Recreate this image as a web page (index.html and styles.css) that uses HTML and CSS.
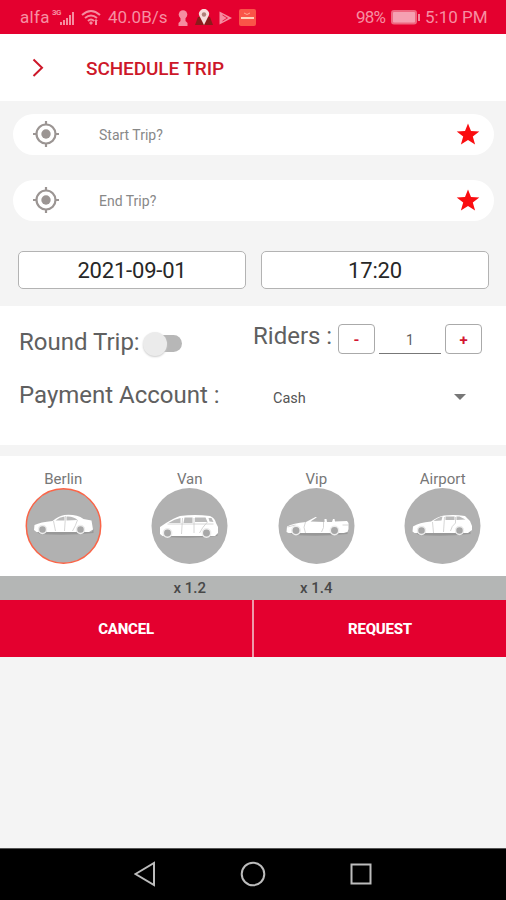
FILE: index.html
```html
<!DOCTYPE html>
<html lang="en">
<head>
<meta charset="utf-8">
<title>Schedule Trip</title>
<link rel="stylesheet" href="styles.css">
</head>
<body>
<div class="status">
  <span class="carrier">alfa</span><span class="network">3G</span>
  <svg class="signal" width="15" height="14" viewBox="0 0 15 14"><path d="M0 11h2v3H0zM3 9h2v5H3zM6 7h2v7H6zM9 4h2v10H9zM12 1h2v13h-2z"/></svg>
  <svg class="wifi" width="20" height="17" viewBox="0 0 20 17"><path d="M1 6Q10-2 19 6M4 9q6-5 12 0M7 12q3-3 6 0"/><path class="solid" d="M8 14l2-2 2 2-2 2zM13 12l2-2 2 2h-1v4h-2v-4z"/></svg>
  <span class="speed">40.0B/s</span>
  <svg class="keyhole" width="10" height="16" viewBox="0 0 10 16"><circle cx="5" cy="4.500" r="4.300"/><path d="M2.500 7h5v4l2 2v3h-9v-3l2-2z"/></svg>
  <svg class="pin" width="18" height="17" viewBox="0 0 18 17"><path fill="#8b1b1b" d="M3 8h12l3 8H0z"/><path fill="#f8dedb" d="M9 16L5 8a5 5 0 1 1 8 0z"/><circle cx="9" cy="5.500" r="2.200" fill="#b08078"/></svg>
  <svg class="play" width="13" height="14" viewBox="0 0 13 14"><path d="M.5.5L13 7 .5 13.500z"/><path class="fold" d="M3.500 4l5 3-5 3"/></svg>
  <svg class="bag" width="17" height="17" viewBox="0 0 17 17"><rect width="17" height="17" rx="2" fill="#fa5448"/><path d="M5 4q3 3 6 0" fill="none" stroke="#ffaa93"/><path d="M2 9h13" stroke="#ffd3bc" stroke-width="2"/></svg>
  <span class="percent">98%</span>
  <svg class="battery" width="29" height="15" viewBox="0 0 29 15"><rect x="1" y="1" width="24" height="12.500" rx="2" fill="#f5a1b2" stroke="#ee6880" stroke-width="2"/><path d="M27 4h2v7h-2z" fill="#f28ca0"/></svg>
  <span class="clock">5:10 PM</span>
</div>
<header class="header">
  <svg class="chevron" width="12" height="20" viewBox="0 0 12 20"><path d="M1.500 1.500L10 9.800 1.500 18"/></svg>
  <h1 class="title">SCHEDULE TRIP</h1>
</header>
<main>
  <section class="places">
    <div class="place">
      <svg class="target" width="28" height="28" viewBox="0 0 28 28"><circle cx="14" cy="14" r="9.500"/><circle class="dot" cx="14" cy="14" r="4.700"/><path d="M14 1v4M14 23v4M1 14h4M23 14h4"/></svg>
      <span class="hint">Start Trip?</span>
      <svg class="star" width="24" height="22" viewBox="0 0 24 22"><path d="M12 .5l3 7.600 8.300.4-6.500 5 2.300 8-7.100-4.500-7.100 4.500 2.300-8-6.500-5L9 8.100z"/></svg>
    </div>
    <div class="place">
      <svg class="target" width="28" height="28" viewBox="0 0 28 28"><circle cx="14" cy="14" r="9.500"/><circle class="dot" cx="14" cy="14" r="4.700"/><path d="M14 1v4M14 23v4M1 14h4M23 14h4"/></svg>
      <span class="hint">End Trip?</span>
      <svg class="star" width="24" height="22" viewBox="0 0 24 22"><path d="M12 .5l3 7.600 8.300.4-6.500 5 2.300 8-7.100-4.500-7.100 4.500 2.300-8-6.500-5L9 8.100z"/></svg>
    </div>
    <div class="when"><div class="field">2021-09-01</div><div class="field">17:20</div></div>
  </section>
  <section class="options">
    <div class="trip-row">
      <span class="label round">Round Trip:</span>
      <span class="switch"><span class="thumb"></span></span>
      <span class="label riders">Riders :</span>
      <span class="step">-</span>
      <span class="count">1</span>
      <span class="step">+</span>
    </div>
    <div class="pay-row">
      <span class="label payment">Payment Account :</span>
      <span class="method">Cash</span>
      <span class="caret"></span>
    </div>
  </section>
  <section class="cars">
    <div class="car"><span class="name">Berlin</span>
      <svg width="77" height="76" viewBox="0 0 76 76"><circle class="disc chosen" cx="38" cy="38" r="37.200"/><path class="shade" d="M12 44h54l2-3v4q-26 3-54 1z"/><path class="body" d="M8.500 42l.5-5q6-3 18-4 6-5 12-6 12-1 19 4l8 1.500 1 6 .5 3-4 2.500H11z"/><path class="glass" d="M30 32.500q4-3.500 9-4v4zM41 28.500q7-.5 11 3.500l-11 .5z"/><path class="seam" d="M40 28l-1 15M28 33l2 10M52 32q-2 6-5 11"/><g class="wheel"><circle cx="17" cy="41.500" r="4"/><circle cx="55" cy="41.500" r="4"/></g></svg>
    </div>
    <div class="car"><span class="name">Van</span>
      <svg width="77" height="76" viewBox="0 0 76 76"><circle class="disc" cx="38" cy="38" r="38"/><path class="shade" d="M13 47h50l3-3v4q-25 3-52 1z"/><path class="body" d="M8.500 46V39l6-4q8-5 14-7 15-2 30 0 5 2 6 7l2 4v6l-3 3H11z"/><path class="glass" d="M17 35q6-4 12-5v5zM33 29.500h8v5.500h-9zM43.500 29.500H54l2 4.500H43.500zM57 30h3l2 4-4-.5z"/><path class="seam" d="M31 30l-1 16M42.500 30v15M56 34q-5 5-8 11M16 36h46"/><g class="wheel"><circle cx="16" cy="45" r="4.200"/><circle cx="55" cy="45" r="4.200"/></g></svg>
    </div>
    <div class="car"><span class="name">Vip</span>
      <svg width="77" height="76" viewBox="0 0 76 76"><circle class="disc" cx="38" cy="38" r="38"/><path class="shade" d="M12 45h54l3-3v4q-26 3-54 1z"/><path class="body" d="M8 44l.5-5.500q6-3.500 19-4.500l9.500-5 1.500.3L32 33.500l14 .5v-3h2l.5 3h5l1-3h1.500l.5 2.500 12-.5 1.500 2v6l-1 3-4 1H10z"/><path class="seam" d="M27 34q-3 5 0 11M45 34q1 6-2 10M9 39l8-2M64 37h6"/><g class="wheel"><circle cx="17.500" cy="42.500" r="4.200"/><circle cx="56" cy="42.500" r="4.200"/></g></svg>
    </div>
    <div class="car"><span class="name">Airport</span>
      <svg width="77" height="76" viewBox="0 0 76 76"><circle class="disc" cx="38" cy="38" r="38"/><path class="shade" d="M12 45h50l4-3v4q-26 3-52 1z"/><path class="body" d="M8 43.500l.5-5q6-4 18-5 7-5 13-6 11-1 21 .5l5 5 2 5v4l-4 3H10z"/><path class="glass" d="M29 33q5-4 9-4.500l-1 4zM41 28.500h9v3.500h-9zM52 28.500h3l6 3-9 .5z"/><path class="seam" d="M28 34l1 11M40 29l-1 15M51 29v6q-4 3-5 8"/><g class="wheel"><circle cx="17" cy="42.500" r="4"/><circle cx="55" cy="42.500" r="4"/></g></svg>
    </div>
  </section>
  <div class="rates"><span></span><span>x 1.2</span><span>x 1.4</span><span></span></div>
  <div class="actions"><div class="action">CANCEL</div><div class="action">REQUEST</div></div>
</main>
<nav class="nav">
  <svg width="22" height="26" viewBox="0 0 22 26"><path d="M1.500 13L20 2v22z"/></svg>
  <svg width="26" height="26" viewBox="0 0 26 26"><circle cx="13" cy="13" r="11.300"/></svg>
  <svg width="22" height="26" viewBox="0 0 22 26"><path d="M1.500 3.500h19v19h-19z"/></svg>
</nav>
</body>
</html>
```
FILE: styles.css
```css
* { box-sizing: border-box; }
body { margin: 0; width: 506px; height: 900px; display: flex; flex-direction: column; background: #f4f4f4; font-family: Roboto, "Liberation Sans", sans-serif; color: #666; overflow: hidden; }
main { flex: 1; }
svg { display: block; flex: none; }
span { white-space: nowrap; }
.status { height: 34px; padding-left: 20px; display: flex; align-items: center; background: #e4002f; color: #f68fa2; font-size: 17px; line-height: 36px; }
.status svg { fill: #f58ca0; margin-top: 1px; }
.carrier { width: 32px; letter-spacing: .3px; }
.network { width: 8px; font-size: 8px; font-weight: 700; line-height: 10px; margin-top: -9px; letter-spacing: -.5px; }
.wifi { margin-left: 6px; }
.status .wifi { fill: none; stroke: #f58ca0; stroke-width: 2; }
.wifi .solid { fill: #f58ca0; stroke: none; }
.speed { width: 59px; margin-left: 7px; letter-spacing: 0; }
.keyhole { margin-left: 11px; }
.pin { margin-left: 7px; }
.play { margin-left: 6px; }
.status .fold { fill: none; stroke: #e4002f; stroke-width: .8; }
.bag { margin-left: 7px; }
.percent { width: 35px; margin-left: 100px; letter-spacing: -.8px; }
.clock { margin-left: 5px; letter-spacing: 0; }
.header { height: 67px; display: flex; align-items: center; padding-left: 32px; background: #fff; }
.chevron { fill: none; stroke: #cd1729; stroke-width: 2; }
.title { margin: 2px 0 0 42px; font-size: 19px; font-weight: 500; color: #cd1729; letter-spacing: -.1px; }
.places { height: 205px; padding: 13px 12px 0 13px; }
.place { height: 41px; margin-bottom: 25px; padding: 0 14px 0 19px; display: flex; align-items: center; background: #fff; border-radius: 21px; }
.target { fill: none; stroke: #9b9593; stroke-width: 2.2; margin-top: -1px; }
.target .dot { fill: #9b9593; stroke: none; }
.hint { flex: 1; margin-left: 39px; font-size: 14px; color: #888; }
.star { fill: #fa0d10; margin-top: -2px; }
.when { display: grid; grid-template-columns: 228px 228px; column-gap: 15px; margin: 30px 0 0 5px; }
.field { height: 38px; border: 1px solid #b3b3b3; border-radius: 5px; background: #fff; color: #272727; font-size: 22px; line-height: 38px; text-align: center; letter-spacing: -.2px; }
.options { height: 139px; padding: 17px 0 0 19px; background: #fff; color: #606060; }
.trip-row { height: 38px; display: flex; align-items: flex-start; }
.label { font-size: 24px; line-height: 28px; font-weight: 400; }
.round { width: 124px; margin-top: 5px; }
.switch { width: 32px; height: 17px; margin: 12px 0 0 7px; border-radius: 9px; background: #b7b7b7; }
.thumb { display: block; width: 24px; height: 24px; margin: -3px 0 0 -7px; border-radius: 50%; background: #ebebeb; box-shadow: 0 1px 2px #ccc; }
.riders { width: 85px; margin-left: 71px; margin-top: -1px; }
.step { width: 37px; height: 30px; margin-top: 1px; border: 1px solid #aaa; border-radius: 4px; color: #d31631; font-size: 15px; font-weight: 700; line-height: 30px; text-align: center; }
.count { width: 62px; height: 30px; margin: 1px 4px 0; border-bottom: 1px solid #777; font-size: 14px; line-height: 33px; text-align: center; }
.pay-row { height: 40px; display: flex; align-items: center; margin-top: 16px; }
.payment { width: 254px; margin-top: -4px; }
.method { width: 181px; margin-top: 2px; font-size: 14.5px; color: #555; }
.caret { border: 6px solid transparent; border-top-color: #777; border-bottom: 0; }
.cars { height: 120px; margin-top: 11px; padding-top: 14px; display: grid; grid-template-columns: repeat(4, 1fr); background: #fff; }
.car { display: flex; flex-direction: column; align-items: center; }
.name { font-size: 15px; line-height: 18px; color: #777; letter-spacing: 0; }
.disc { fill: #b1b1b1; }
.chosen { stroke: #fa6548; stroke-width: 1.5; }
.shade { fill: #989898; }
.body { fill: #fff; }
.glass { fill: #bbb; }
.seam { fill: none; stroke: #ccc; stroke-width: .8; }
.wheel { fill: #a7a7a7; stroke: #ededed; stroke-width: 1.5; }
.rates { height: 24px; display: grid; grid-template-columns: repeat(4, 1fr); background: #b4b6b5; color: #484848; font-size: 15px; font-weight: 500; line-height: 25px; text-align: center; }
.actions { display: grid; grid-template-columns: 1fr 1fr; column-gap: 2px; height: 57px; background: #ee9aaa; }
.action { height: 57px; padding-top: 1px; background: #e4002f; color: #fff; font-size: 15px; line-height: 57px; font-weight: 800; text-align: center; letter-spacing: -.2px; overflow: hidden; }
.nav { height: 52px; padding: 0 134px 0 134px; display: flex; align-items: center; justify-content: space-between; background: #000; border-top: 1px solid #555; }
.nav svg { fill: none; stroke: #bcbcbc; stroke-width: 2; margin-top: -2px; }
```
